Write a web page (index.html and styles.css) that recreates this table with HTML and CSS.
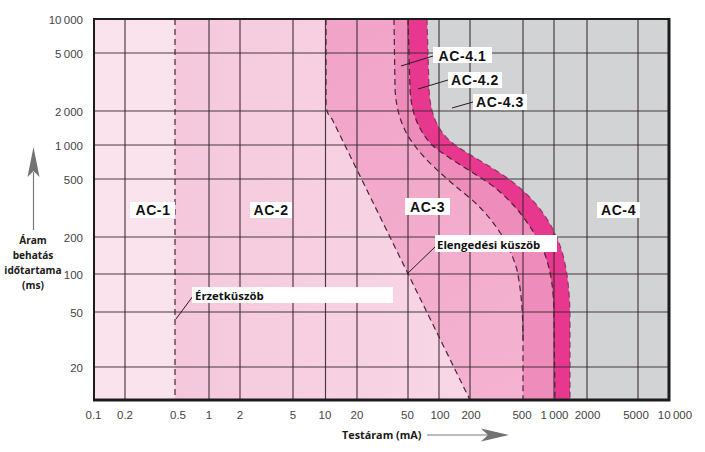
FILE: index.html
```html
<!DOCTYPE html>
<html lang="hu">
<head>
<meta charset="utf-8">
<title>Áram hatási zónák</title>
<link rel="stylesheet" href="styles.css">
</head>
<body>
<div class="figure">
<svg class="chart" width="705" height="452" viewBox="0 0 705 452" xmlns="http://www.w3.org/2000/svg">
  <defs>
    <linearGradient id="g2" x1="175" y1="0" x2="470" y2="0" gradientUnits="userSpaceOnUse">
      <stop offset="0" stop-color="#f5c8dc"/>
      <stop offset="1" stop-color="#f8d7e6"/>
    </linearGradient>
    <linearGradient id="g3" x1="330" y1="19" x2="520" y2="400" gradientUnits="userSpaceOnUse">
      <stop offset="0" stop-color="#f1a3c8"/>
      <stop offset="1" stop-color="#f4b3d0"/>
    </linearGradient>
  </defs>

  <!-- zones -->
  <rect class="z1" x="94" y="19" width="81" height="381"/>
  <rect x="175" y="19" width="494" height="381" fill="url(#g2)"/>
  <path fill="url(#g3)" d="M326,19 L326,105 Q327,115 332,119 L470,400 L669,400 L669,19 Z"/>
  <path class="z41" d="M394,19 L395,88 C396,110 402,130 415,146 C425,160 445,178 470,198 C495,220 510,245 517,270 C521,290 523,310 523,340 L523,400 L669,400 L669,19 Z"/>
  <path class="z42" d="M408,19 L410,88 C411,112 418,130 432,145 C447,158 470,170 490,184 C515,202 533,228 544,252 C551,270 554,290 554,320 L555,400 L669,400 L669,19 Z"/>
  <path class="z4" d="M427,19 L429,88 C430,112 436,128 450,141 C466,154 490,165 510,180 C535,198 555,225 563,255 C568,275 570,295 570,320 L570,400 L669,400 L669,19 Z"/>

  <!-- grid -->
  <g class="grid">
    <line x1="125" y1="19" x2="125" y2="400"/>
    <line x1="209" y1="19" x2="209" y2="400"/>
    <line x1="240" y1="19" x2="240" y2="400"/>
    <line x1="293" y1="19" x2="293" y2="400"/>
    <line x1="325.5" y1="19" x2="325.5" y2="400"/>
    <line x1="357" y1="19" x2="357" y2="400"/>
    <line x1="408" y1="19" x2="408" y2="400"/>
    <line x1="439" y1="19" x2="439" y2="400"/>
    <line x1="470" y1="19" x2="470" y2="400"/>
    <line x1="523" y1="19" x2="523" y2="340"/>
    <line x1="554" y1="19" x2="554" y2="400"/>
    <line x1="587" y1="19" x2="587" y2="400"/>
    <line x1="638" y1="19" x2="638" y2="400"/>
    <line x1="94" y1="53" x2="669" y2="53"/>
    <line x1="94" y1="111" x2="669" y2="111"/>
    <line x1="94" y1="145" x2="669" y2="145"/>
    <line x1="94" y1="179" x2="669" y2="179"/>
    <line x1="94" y1="237" x2="669" y2="237"/>
    <line x1="94" y1="274" x2="669" y2="274"/>
    <line x1="94" y1="312" x2="669" y2="312"/>
    <line x1="94" y1="367" x2="669" y2="367"/>
  </g>

  <!-- dashed boundaries -->
  <g class="dash">
    <path d="M175,19 L175,400"/>
    <path d="M326,19 L326,105 Q327,115 332,119 L470,400"/>
    <path d="M394,19 L395,88 C396,110 402,130 415,146 C425,160 445,178 470,198 C495,220 510,245 517,270 C521,290 523,310 523,340 L523,400"/>
    <path d="M408,19 L410,88 C411,112 418,130 432,145 C447,158 470,170 490,184 C515,202 533,228 544,252 C551,270 554,290 554,320 L555,400"/>
    <path class="dash-soft" d="M427,19 L429,88 C430,112 436,128 450,141 C466,154 490,165 510,180 C535,198 555,225 563,255 C568,275 570,295 570,320 L570,400"/>
  </g>

  <!-- frame -->
  <path class="frame" d="M94,400 L94,19 L669,19"/>
  <path class="frame frame-heavy" d="M669,18 L669,400 L93,400"/>

  <!-- pointer lines -->
  <g class="pointer">
    <line x1="433" y1="56" x2="401" y2="66"/>
    <line x1="448" y1="80" x2="418" y2="89"/>
    <line x1="473" y1="102" x2="452" y2="108"/>
    <line x1="193" y1="296" x2="176" y2="319"/>
    <line x1="436" y1="246" x2="407" y2="274"/>
  </g>

  <!-- zone labels -->
  <g class="zone-label">
    <rect class="box" x="130" y="202" width="45" height="16"/>
    <text x="153" y="215" text-anchor="middle">AC-1</text>
    <rect class="box" x="250" y="202" width="42" height="16"/>
    <text x="271" y="215" text-anchor="middle">AC-2</text>
    <rect class="box" x="405" y="198" width="45" height="17"/>
    <text x="427.5" y="212" text-anchor="middle">AC-3</text>
    <rect class="box" x="597" y="202" width="43" height="16"/>
    <text x="618.5" y="214.5" text-anchor="middle">AC-4</text>
    <rect class="box" x="433" y="47" width="59" height="16"/>
    <text x="462.5" y="60.5" text-anchor="middle">AC-4.1</text>
    <rect class="box" x="448" y="72" width="54" height="16"/>
    <text x="475" y="84.5" text-anchor="middle">AC-4.2</text>
    <rect class="box" x="473" y="94" width="54" height="16"/>
    <text x="500" y="106.5" text-anchor="middle">AC-4.3</text>
  </g>

  <g class="note-label">
    <rect class="box" x="192" y="287" width="201" height="16"/>
    <text x="195" y="300">Érzetküszöb</text>
    <rect class="box" x="435" y="235" width="122" height="17"/>
    <text x="437" y="248.5">Elengedési küszöb</text>
  </g>

  <!-- y tick labels -->
  <g class="tick tick-y">
    <text x="83" y="23.5">10&#8201;000</text>
    <text x="83" y="57.5">5&#8201;000</text>
    <text x="83" y="115.5">2&#8201;000</text>
    <text x="83" y="149.5">1&#8201;000</text>
    <text x="83" y="183.5">500</text>
    <text x="83" y="241.5">200</text>
    <text x="83" y="278.5">100</text>
    <text x="83" y="316.5">50</text>
    <text x="83" y="371.5">20</text>
  </g>

  <!-- x tick labels -->
  <g class="tick tick-x">
    <text x="93.5" y="419">0.1</text>
    <text x="125" y="419">0.2</text>
    <text x="178" y="419">0.5</text>
    <text x="209" y="419">1</text>
    <text x="240" y="419">2</text>
    <text x="293" y="419">5</text>
    <text x="325" y="419">10</text>
    <text x="357" y="419">20</text>
    <text x="407.5" y="419">50</text>
    <text x="440" y="419">100</text>
    <text x="471" y="419">200</text>
    <text x="522" y="419">500</text>
    <text x="554.5" y="419">1&#8201;000</text>
    <text x="587.5" y="419">2000</text>
    <text x="636" y="419">5000</text>
    <text x="675" y="419">10&#8201;000</text>
  </g>

  <!-- axis titles -->
  <text class="axis-title" x="342" y="438.5">Testáram (mA)</text>
  <line class="arrow-line" x1="427" y1="435" x2="488" y2="435"/>
  <path class="arrow-head" d="M509,435 L481,428.5 L488,435 L481,441.5 Z"/>

  <line class="arrow-line" x1="33.5" y1="230" x2="33.5" y2="172"/>
  <path class="arrow-head" d="M33.5,147 L39.5,177 L33.5,171 L27.5,177 Z"/>
  <g class="axis-title axis-title-y">
    <text x="33" y="244">Áram</text>
    <text x="33" y="259">behatás</text>
    <text x="33" y="274">időtartama</text>
    <text x="33" y="289">(ms)</text>
  </g>
</svg>
</div>
</body>
</html>
```

FILE: styles.css
```css
html, body {
  margin: 0;
  padding: 0;
  background: #ffffff;
}

.figure {
  width: 705px;
  height: 452px;
  overflow: hidden;
}

.chart {
  display: block;
}

.z1 { fill: #fae3ec; }
.z41 { fill: #ee8dbb; }
.z42 { fill: #e8378e; }
.z4 { fill: #d2d3d5; }

.grid line {
  stroke: #35282e;
  stroke-width: 1.15;
  stroke-opacity: 0.9;
}

.dash path {
  fill: none;
  stroke: #4a2438;
  stroke-width: 1.2;
  stroke-dasharray: 6 4;
}

.dash .dash-soft {
  stroke: #7a2a52;
  stroke-opacity: 0.8;
}

.frame {
  fill: none;
  stroke: #1c1c1c;
  stroke-width: 2;
}

.frame-heavy {
  stroke-width: 3;
}

.pointer line {
  stroke: #2a1a22;
  stroke-width: 1;
}

.box {
  fill: #ffffff;
}

.zone-label text {
  font-family: "Liberation Sans", Arial, sans-serif;
  font-weight: bold;
  font-size: 14px;
  letter-spacing: 0.6px;
  fill: #111111;
}

.note-label text {
  font-family: "Open Sans", "Noto Sans", sans-serif;
  font-weight: bold;
  font-size: 11.4px;
  fill: #111111;
}

.tick {
  font-family: "Liberation Sans", Arial, sans-serif;
  font-size: 11.5px;
  fill: #444444;
}

.tick-y text {
  text-anchor: end;
}

.tick-x text {
  text-anchor: middle;
}

.axis-title {
  font-family: "Open Sans", "Noto Sans", sans-serif;
  font-weight: bold;
  font-size: 10.8px;
  fill: #1a1a1a;
}

.axis-title-y text {
  text-anchor: middle;
  font-size: 10.1px;
}

.arrow-line {
  stroke: #7a7a7a;
  stroke-width: 1.2;
}

.arrow-head {
  fill: #737373;
}
```
